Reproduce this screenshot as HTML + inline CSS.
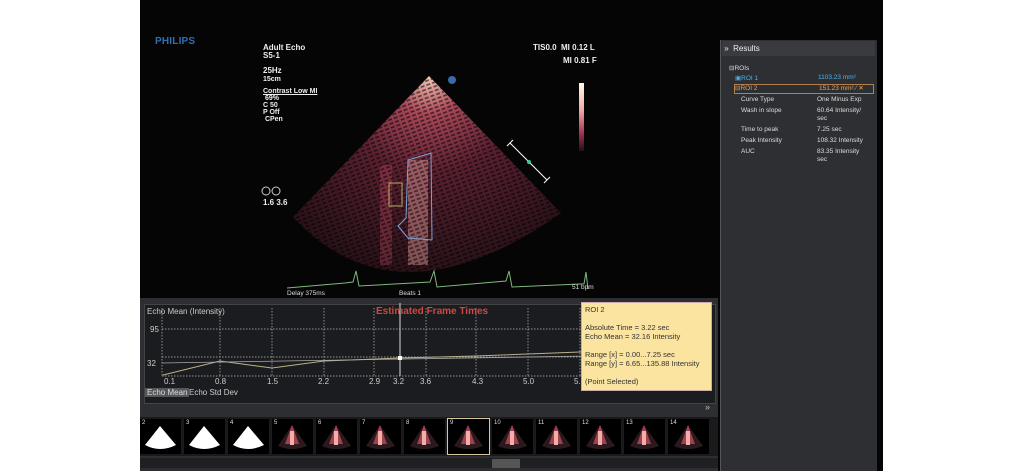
<!DOCTYPE html>
<html><head><meta charset="utf-8"><style>
body{margin:0;width:1024px;height:471px;background:#fff;position:relative;overflow:hidden;font-family:"Liberation Sans",sans-serif}
.a{position:absolute}
.w{color:#eee;font-size:8px;font-weight:bold;line-height:8px}
.p td{padding:0;font-size:6.5px;color:#ddd;vertical-align:top;line-height:8px}
</style></head><body>
<div class="a" style="left:140px;top:0;width:743px;height:471px;background:#050506"></div>
<div class="a" style="left:155px;top:36px;color:#2f6fb5;font-weight:bold;font-size:10px;letter-spacing:0.2px">PHILIPS</div>
<div class="a w" style="left:263px;top:44px">Adult Echo<br>S5-1</div>
<div class="a w" style="left:263px;top:67px">25Hz<br><span style="font-size:7px">15cm</span></div>
<div class="a w" style="left:263px;top:88px;font-size:7px;line-height:7px"><u>Contrast Low MI</u><br>&nbsp;69%<br>C 50<br>P Off<br>&nbsp;CPen</div>
<div class="a w" style="left:263px;top:199px">1.6 3.6</div>
<div class="a w" style="left:533px;top:44px">TIS0.0 &nbsp;MI 0.12 L</div>
<div class="a w" style="left:563px;top:57px">MI 0.81 F</div>
<div class="a" style="left:579px;top:83px;width:5px;height:68px;background:linear-gradient(#fffbe8,#f0a8a8 40%,#a03050 75%,#201018)"></div>
<svg class="a" style="left:140px;top:0" width="580" height="300">
<defs><radialGradient id="g" cx="289" cy="76" r="210" gradientUnits="userSpaceOnUse">
<stop offset="0" stop-color="#f6c9b8"/><stop offset="0.18" stop-color="#a84858"/><stop offset="0.45" stop-color="#5a2030"/><stop offset="1" stop-color="#221014"/></radialGradient>
<pattern id="n" width="6" height="4" patternUnits="userSpaceOnUse" patternTransform="rotate(-20)"><path d="M0 2h4" stroke="#000" stroke-width="1.6" opacity=".6"/></pattern></defs>
<path d="M289 76 L153 217 Q257 329 421 213 Z" fill="url(#g)"/>
<rect x="268" y="160" width="20" height="105" fill="#e8a0a0" opacity=".45"/>
<rect x="240" y="165" width="12" height="100" fill="#c04860" opacity=".35"/>
<path d="M289 76 L153 217 Q257 329 421 213 Z" fill="url(#n)"/>
<path d="M268 160 L291 153 L292 240 L268 238 L258 226 L266 218 Z" fill="none" stroke="#7aa4d8" stroke-width="1"/>
<rect x="249" y="183" width="13" height="23" fill="none" stroke="#b8b060" stroke-width="1"/>
<circle cx="312" cy="80" r="4" fill="#3a6aa8"/>
<path d="M370 143 L407 180 M367 146 L373 140 M404 183 L410 177" stroke="#fff" stroke-width="1"/>
<circle cx="389" cy="162" r="2" fill="#3c9"/>
<path d="M147 288 L205 283 L213 282 L216 271 L219 286 L290 282 L294 271 L297 287 L366 281 L369 271 L372 287 L440 284 L444 284 L446 272 L448 289" fill="none" stroke="#7fb87f" stroke-width="1"/>
<text x="147" y="295" fill="#ddd" font-size="6.5" font-family="Liberation Sans">Delay 375ms</text>
<text x="259" y="295" fill="#ddd" font-size="6.5" font-family="Liberation Sans">Beats 1</text>
<text x="432" y="289" fill="#ddd" font-size="6.5" font-family="Liberation Sans">51 bpm</text>
<circle cx="126" cy="191" r="4" fill="none" stroke="#ccc"/><circle cx="136" cy="191" r="4" fill="none" stroke="#ccc"/>
</svg>
<div class="a" style="left:720px;top:40px;width:156px;height:431px;background:#2e2f33;border-left:1px solid #555"></div>
<div class="a" style="left:722px;top:41px;width:153px;height:15px;background:#3a3b3f;color:#eee;font-size:8px;line-height:15px">&nbsp;» &nbsp;Results</div>
<div class="a" style="left:729px;top:64px;color:#ddd;font-size:6.5px">⊟ROIs</div>
<div class="a" style="left:735px;top:74px;color:#4ab3e8;font-size:6.5px">▣ROI 1</div>
<div class="a" style="left:818px;top:74px;color:#4ab3e8;font-size:6.5px">1103.23 mm²</div>
<div class="a" style="left:734px;top:84px;width:138px;height:8px;border:1px solid #b08050;color:#f0a050;font-size:6.5px;line-height:8px">⊟ROI 2<span style="position:absolute;left:84px">151.23 mm² ⁄ ✕</span></div>
<table class="a p" style="left:741px;top:96px;border-collapse:collapse"><tr><td style="width:76px">Curve Type</td><td>One Minus Exp</td></tr>
<tr><td style="padding-top:3px">Wash in slope</td><td style="padding-top:3px">60.64 Intensity/<br>sec</td></tr>
<tr><td style="padding-top:3px">Time to peak</td><td style="padding-top:3px">7.25 sec</td></tr>
<tr><td style="padding-top:3px">Peak Intensity</td><td style="padding-top:3px">108.32 Intensity</td></tr>
<tr><td style="padding-top:3px">AUC</td><td style="padding-top:3px">83.35 Intensity<br>sec</td></tr></table>
<div class="a" style="left:140px;top:298px;width:578px;height:173px;background:#2d2e31"></div>
<div class="a" style="left:144px;top:304px;width:570px;height:98px;background:#1b1c1f;border:1px solid #444"></div>
<svg class="a" style="left:140px;top:298px" width="578" height="110">
<g stroke="#bbb" stroke-dasharray="1.5 1.5" stroke-width=".7">
<line x1="22" y1="31" x2="570" y2="31"/><line x1="22" y1="59" x2="570" y2="59"/><line x1="22" y1="78" x2="570" y2="78"/><line x1="22" y1="10" x2="22" y2="78"/>
<line x1="80" y1="10" x2="80" y2="78"/><line x1="132" y1="10" x2="132" y2="78"/><line x1="184" y1="10" x2="184" y2="78"/><line x1="234" y1="10" x2="234" y2="78"/><line x1="286" y1="10" x2="286" y2="78"/><line x1="336" y1="10" x2="336" y2="78"/><line x1="388" y1="10" x2="388" y2="78"/><line x1="440" y1="10" x2="440" y2="78"/></g>
<line x1="260" y1="5" x2="260" y2="78" stroke="#ddd"/>
<polyline points="23,77 80,63 132,70 184,63 260,60 336,58 440,54 570,50" fill="none" stroke="#b8b28a"/>
<line x1="22" y1="65" x2="570" y2="56" stroke="#aaa" stroke-width=".8"/>
<rect x="258" y="58" width="4" height="4" fill="#fff"/>
</svg>
<div class="a" style="left:147px;top:307px;color:#ccc;font-size:8px">Echo Mean (Intensity)</div>
<div class="a" style="left:376px;top:306px;color:#d04840;font-size:10px;font-weight:bold">Estimated Frame Times</div>
<div class="a" style="left:150px;top:325px;color:#ccc;font-size:8px">95</div>
<div class="a" style="left:147px;top:359px;color:#ccc;font-size:8px">32</div>
<div class="a" style="left:0;top:377px;color:#ccc;font-size:8px">
<span class="a" style="left:164px">0.1</span><span class="a" style="left:215px">0.8</span><span class="a" style="left:267px">1.5</span><span class="a" style="left:318px">2.2</span><span class="a" style="left:369px">2.9</span><span class="a" style="left:393px">3.2</span><span class="a" style="left:420px">3.6</span><span class="a" style="left:472px">4.3</span><span class="a" style="left:523px">5.0</span><span class="a" style="left:574px">5.</span></div>
<div class="a" style="left:145px;top:388px;background:#55575a;color:#ddd;font-size:8px;padding:0 2px">Echo Mean</div>
<div class="a" style="left:189px;top:388px;color:#ccc;font-size:8px">Echo Std Dev</div>
<div class="a" style="left:581px;top:302px;width:126px;height:85px;background:#fbe3a0;border:1px solid #caa;color:#333;font-size:7.5px;line-height:9px;padding:2px 0 0 3px">ROI 2<br><br>Absolute Time = 3.22 sec<br>Echo Mean = 32.16 Intensity<br><br>Range [x] = 0.00...7.25 sec<br>Range [y] = 6.65...135.88 Intensity<br><br>(Point Selected)</div>
<div class="a" style="left:705px;top:402px;color:#bbb;font-size:9px">»</div>
<div class="a" style="left:140px;top:417px;width:578px;height:39px;background:#1a1a1c"></div>
<div id="th"></div>
<div class="a" style="left:140px;top:458px;width:578px;height:10px;background:#1f2022"></div>
<div class="a" style="left:492px;top:459px;width:28px;height:9px;background:#555"></div>
<script>
var h='';for(var i=0;i<13;i++){var x=140+i*44;var wh=i<3;
h+='<div class="a" style="left:'+x+'px;top:419px;width:41px;height:35px;background:#000;'+(i==7?'outline:1px solid #d8c8a0;':'')+'overflow:hidden">'+
(wh?'<svg width="41" height="35"><path d="M20 7 L5 26 Q20 34 36 26Z" fill="#fff"/></svg>':'<svg width="41" height="35"><path d="M20 6 L6 27 Q20 33 35 27Z" fill="#2a1a1e"/><path d="M20 6 L13 25 L27 25Z" fill="#a04050"/><rect x="18" y="12" width="4" height="14" fill="#f0b0a8"/></svg>')+
'<span class="a" style="left:2px;top:1px;color:#ddd;font-size:6px">'+(i+2)+'</span></div>';}
document.getElementById('th').innerHTML=h;
</script>
</body></html>
